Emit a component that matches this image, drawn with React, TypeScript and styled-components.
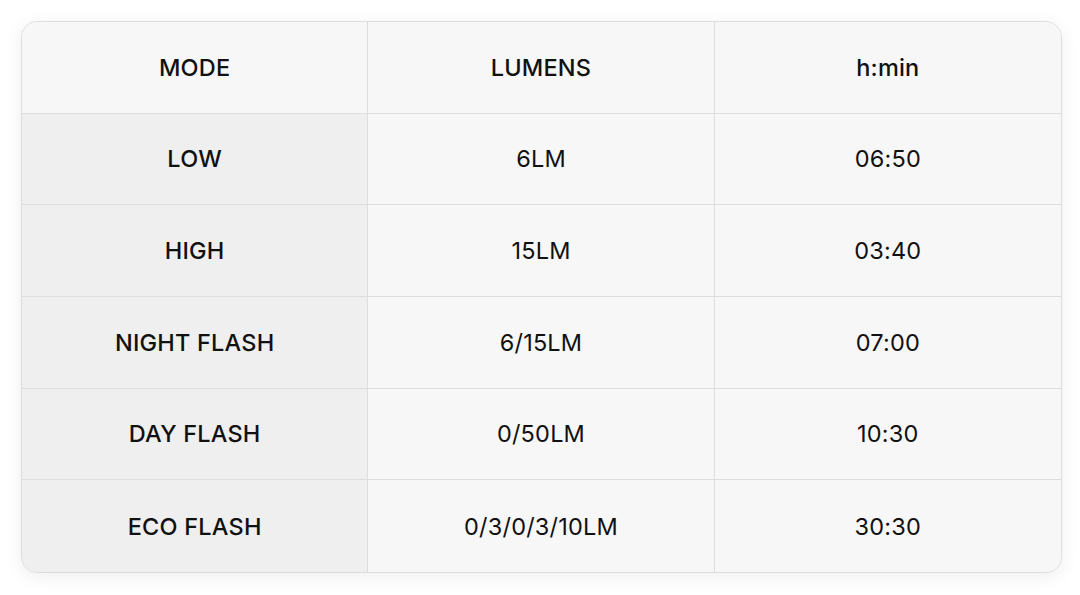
import { createGlobalStyle, styled } from "styled-components";

type Row = {
  mode: string;
  lumens: string;
  time: string;
};

const rows: Row[] = [
  { mode: "LOW", lumens: "6LM", time: "06:50" },
  { mode: "HIGH", lumens: "15LM", time: "03:40" },
  { mode: "NIGHT FLASH", lumens: "6/15LM", time: "07:00" },
  { mode: "DAY FLASH", lumens: "0/50LM", time: "10:30" },
  { mode: "ECO FLASH", lumens: "0/3/0/3/10LM", time: "30:30" },
];

const GlobalStyle = createGlobalStyle`
  body {
    margin: 0;
    background: #ffffff;
    font-family: "Inter", "Open Sans", sans-serif;
    color: #111111;
  }
`;

const Page = styled.div`
  padding: 21px 18px 22px 21px;
`;

const Card = styled.div`
  box-sizing: border-box;
  height: 552px;
  display: grid;
  grid-template-columns: repeat(3, 1fr);
  grid-template-rows: repeat(6, 1fr);
  border: 1px solid #dddddd;
  border-radius: 16px;
  overflow: hidden;
  background: #f7f7f7;
  box-shadow: 0 4px 18px rgba(0, 0, 0, 0.07);
`;

const Cell = styled.div<{ $head?: boolean; $shade?: boolean; $last?: boolean; $bottom?: boolean }>`
  display: flex;
  align-items: center;
  justify-content: center;
  font-size: 23.5px;
  font-weight: ${(p) => (p.$head ? 500 : 400)};
  letter-spacing: 0.2px;
  background: ${(p) => (p.$shade ? "#efefef" : "#f7f7f7")};
  border-right: ${(p) => (p.$last ? "none" : "1px solid #dddddd")};
  border-bottom: ${(p) => (p.$bottom ? "none" : "1px solid #dddddd")};
`;

export default function App() {
  return (
    <>
      <GlobalStyle />
      <Page>
        <Card>
          <Cell $head>MODE</Cell>
          <Cell $head>LUMENS</Cell>
          <Cell $head $last>
            h:min
          </Cell>
          {rows.map((row, i) => {
            const bottom = i === rows.length - 1;
            return [
              <Cell key={row.mode + "m"} $head $shade $bottom={bottom}>
                {row.mode}
              </Cell>,
              <Cell key={row.mode + "l"} $bottom={bottom}>
                {row.lumens}
              </Cell>,
              <Cell key={row.mode + "t"} $last $bottom={bottom}>
                {row.time}
              </Cell>,
            ];
          })}
        </Card>
      </Page>
    </>
  );
}
